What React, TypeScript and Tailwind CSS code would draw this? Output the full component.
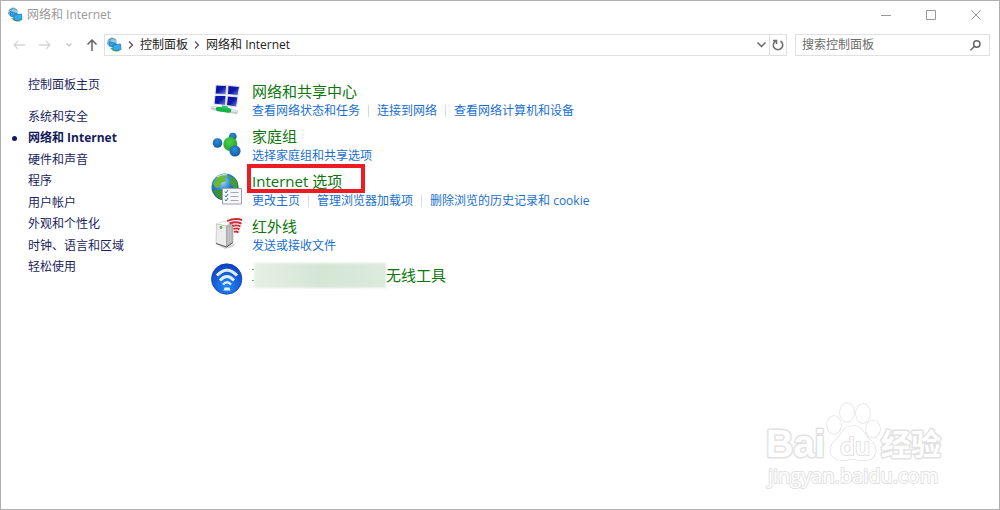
import type { ReactNode } from "react";

const navItems = [
  "系统和安全",
  "网络和 Internet",
  "硬件和声音",
  "程序",
  "用户帐户",
  "外观和个性化",
  "时钟、语言和区域",
  "轻松使用",
];

const activeItem = "网络和 Internet";

type Category = {
  title: string;
  icon: ReactNode;
  links: string[];
  highlighted?: boolean;
};

function NetworkGlyph() {
  return (
    <svg viewBox="0 0 16 16" className="h-4 w-4 shrink-0">
      <circle cx="6" cy="5.5" r="5" fill="#9cc9df" />
      <path d="M2 3.5 Q6 0 10 3 M1.5 7 Q4 4 6 .8 M1 6 Q4 9 6 9" stroke="#5d9cbd" strokeWidth="1" fill="none" />
      <path d="M4 11 Q8 16 14 14 L11 11Z" fill="#5cb83b" />
      <path d="M3.5 4.5 L10 6.5 V11 L3.5 9Z" fill="#2aa2ed" stroke="#1872b4" strokeWidth=".6" />
      <path d="M7 8 L14.5 7 L15 12.5 L9 13.8 L7 12.5Z" fill="#36aaf0" stroke="#1b73ad" strokeWidth=".7" />
    </svg>
  );
}

function SharingIcon() {
  return (
    <svg viewBox="0 0 32 32" className="h-8 w-8">
      <defs>
        <linearGradient id="screen" x1="0" y1="0" x2="1" y2="1">
          <stop offset="0" stopColor="#0a14b4" />
          <stop offset=".5" stopColor="#1116a8" />
          <stop offset="1" stopColor="#6f8fea" />
        </linearGradient>
      </defs>
      <g stroke="#dfe2e6" strokeWidth="1" fill="url(#screen)">
        <path d="M5 2 L15.500 2.500 L15 11.500 L4 11Z" />
        <path d="M17 2.500 L28.500 3.500 L27 12.500 L16.500 11.500Z" />
        <path d="M4 12.500 L15 12.500 L14.500 22.500 L3 21Z" />
        <path d="M16.500 13 L27 14 L25.500 24 L15.500 22.500Z" />
      </g>
      <path d="M2 25 L25 29" stroke="#c3c8ca" strokeWidth="4" strokeLinecap="round" />
      <path d="M2 24.3 L25 28.3" stroke="#eceeee" strokeWidth="1.5" strokeLinecap="round" />
      <path d="M7 26 L18 27.5" stroke="#12b34b" strokeWidth="4.5" strokeLinecap="round" />
      <path d="M11 22.500 L17 23.5 L17 26 L11 25Z" fill="#2bc55f" />
    </svg>
  );
}

function HomegroupIcon() {
  return (
    <svg viewBox="0 0 32 32" className="h-8 w-8">
      <defs>
        <radialGradient id="blueBall" cx=".45" cy=".35" r=".65">
          <stop offset="0" stopColor="#2b8fd8" />
          <stop offset="1" stopColor="#165a9f" />
        </radialGradient>
        <radialGradient id="greenBall" cx=".45" cy=".35" r=".65">
          <stop offset="0" stopColor="#4bd04a" />
          <stop offset="1" stopColor="#24a32c" />
        </radialGradient>
      </defs>
      <circle cx="6.500" cy="15" r="4.8" fill="url(#blueBall)" />
      <circle cx="21.800" cy="8.500" r="3.8" fill="url(#blueBall)" />
      <circle cx="19.3" cy="16" r="7" fill="url(#greenBall)" />
      <circle cx="24" cy="23" r="5.6" fill="url(#blueBall)" />
    </svg>
  );
}

function InternetIcon() {
  return (
    <svg viewBox="0 0 32 32" className="h-8 w-8">
      <defs>
        <radialGradient id="ocean" cx=".4" cy=".3" r=".7">
          <stop offset="0" stopColor="#a8dcfa" />
          <stop offset=".45" stopColor="#2c83cf" />
          <stop offset="1" stopColor="#123f83" />
        </radialGradient>
      </defs>
      <circle cx="14" cy="14" r="13.5" fill="url(#ocean)" />
      <path d="M4 7 Q8 1 15 1 L17 3 L14 5 L15 8 L10 10 L9 14 L5 15 L2 11Z" fill="#69b936" />
      <path d="M18 3 Q24 4 26.500 10 L26.500 15 L23 16 L21 12 L18 10 L20 7Z" fill="#429f35" />
      <path d="M4 17 L11 17 L14 20 L12 27 Q5 25 2 18Z" fill="#3b9236" />
      <path d="M6 4 Q10 1 16 1.500" stroke="#dff2fb" strokeWidth="1.5" fill="none" opacity=".7" />
      <path d="M11.5 15.5 H30.5 V31 H11.5Z" fill="#f6f7f9" stroke="#9ba2a9" />
      <path d="M14 18.5 l1 1.5 2-3 M14 22.5 l1 1.5 2-3 M14 26.5 l1 1.5 2-3" fill="none" stroke="#3577bb" />
      <path d="M19.500 19.5 H27.500 M19.500 23.5 H27.500 M19.500 27.5 H27.500" stroke="#a4a9b1" strokeWidth="1.2" />
    </svg>
  );
}

function InfraredIcon() {
  return (
    <svg viewBox="0 0 32 32" className="h-8 w-8">
      <path d="M6 27 L15 29 L25 25 L22 29 L14 31Z" fill="#d6d6d6" />
      <path d="M5.500 6 L13 3 L22 5 L15.500 8Z" fill="#fafafa" stroke="#c4c4c4" strokeWidth=".5" />
      <path d="M5.500 6 L15.500 8 L15.5 29 L5 25.5Z" fill="#ececec" stroke="#b5b5b5" strokeWidth=".6" />
      <path d="M15.500 8 L22 5 L22 24.500 L15.5 29Z" fill="#b4b4b4" stroke="#919191" strokeWidth=".5" />
      <path d="M17.500 10 V26 M19.500 9 V25" stroke="#d0d0d0" strokeWidth=".7" />
      <path d="M5 25.5 L15.5 29 L22 24.500" stroke="#545454" fill="none" />
      <circle cx="10" cy="9.500" r="1.4" fill="#58b53f" />
      <g fill="none" stroke="#cf2a34" strokeWidth="1.9">
        <path d="M16 3 Q24 -.5 31 2" />
        <path d="M18.500 5.500 Q24 3 30.500 5.500" />
        <path d="M21.500 8 Q26 6.500 29.500 8.500" />
        <path d="M22.500 11 Q26 9.500 28.500 11.500" />
        <path d="M23 14 Q25.500 12.800 27.500 14.500" />
      </g>
    </svg>
  );
}

function WirelessIcon() {
  return (
    <svg viewBox="0 0 32 32" className="h-8 w-8">
      <defs>
        <radialGradient id="disc" cx=".5" cy=".75" r=".7">
          <stop offset="0" stopColor="#2389f4" />
          <stop offset="1" stopColor="#1043c5" />
        </radialGradient>
      </defs>
      <circle cx="15.700" cy="16" r="15.2" fill="url(#disc)" stroke="#1543a7" strokeWidth=".8" />
      <g fill="none" stroke="#dceefb">
        <path d="M6 12.500 Q16 2 26 12.500" strokeWidth="3.200" />
        <path d="M9 17.500 Q16 9.500 23 17.500" strokeWidth="2.800" />
        <path d="M12 21.500 Q16 17 20 21.500" strokeWidth="2.400" />
      </g>
      <path d="M13.500 24.500 H18.500 L19.500 27.500 H12.500Z" fill="#e2f1fb" />
    </svg>
  );
}

function Watermark() {
  return (
    <svg
      viewBox="0 0 190 100"
      className="pointer-events-none absolute right-[48px] bottom-[14px] h-[100px] w-[190px]"
      fill="#fff"
      stroke="#e2e2e2"
      strokeWidth="3"
      strokeLinejoin="round"
      paintOrder="stroke"
    >
      <g fontWeight="700">
        <text x="5" y="62" fontSize="38" fontFamily="'Liberation Sans', sans-serif">Bai</text>
        <text x="120" y="60" fontSize="30" fontFamily="'Noto Sans CJK SC', sans-serif">经验</text>
      </g>
      <g strokeWidth="1.500">
        <ellipse cx="73" cy="30" rx="7" ry="9" />
        <ellipse cx="86" cy="17.500" rx="7" ry="9.500" />
        <ellipse cx="102" cy="18.500" rx="7" ry="9.500" />
        <ellipse cx="112" cy="34" rx="7" ry="8.500" />
        <path d="M92 31 C103 31 103 41 110 46 C118 53 115 65 105 65 C98 66 97 64 92 64 C87 64 86 66 80 65 C69 64 66 54 74 46 C81 40 81 31 92 31Z" />
      </g>
      <text x="79" y="60" fontSize="24" fontFamily="'Open Sans', sans-serif" fontWeight="600" strokeWidth="2">du</text>
      <text x="7" y="88" fontSize="20" fontFamily="'Open Sans', sans-serif" strokeWidth="2">jingyan.baidu.com</text>
    </svg>
  );
}

const categories: Category[] = [
  {
    title: "网络和共享中心",
    icon: <SharingIcon />,
    links: ["查看网络状态和任务", "连接到网络", "查看网络计算机和设备"],
  },
  { title: "家庭组", icon: <HomegroupIcon />, links: ["选择家庭组和共享选项"] },
  {
    title: "Internet 选项",
    icon: <InternetIcon />,
    links: ["更改主页", "管理浏览器加载项", "删除浏览的历史记录和 cookie"],
    highlighted: true,
  },
  { title: "红外线", icon: <InfraredIcon />, links: ["发送或接收文件"] },
];

function TitleBar() {
  return (
    <header className="flex h-7 items-center justify-between">
      <div className="flex items-center gap-1 pl-[6px] text-[#999]">
        <NetworkGlyph />
        <h1>网络和 Internet</h1>
      </div>
      <div className="flex pr-px text-[#999]">
        <button type="button" aria-label="最小化" className="flex h-7 w-[45px] items-center justify-center">
          <svg viewBox="0 0 10 10" className="h-[10px] w-[10px]" stroke="currentColor">
            <path d="M0 5.500 H10" />
          </svg>
        </button>
        <button type="button" aria-label="最大化" className="flex h-7 w-[45px] items-center justify-center">
          <svg viewBox="0 0 10 10" className="h-[10px] w-[10px]" stroke="currentColor" fill="none">
            <path d="M.5 .5 H9.500 V9.500 H.5Z" />
          </svg>
        </button>
        <button type="button" aria-label="关闭" className="flex h-7 w-[45px] items-center justify-center">
          <svg viewBox="0 0 10 10" className="h-[10px] w-[10px]" stroke="currentColor">
            <path d="M.5 .5 L9.500 9.500 M9.500 .5 L.5 9.500" />
          </svg>
        </button>
      </div>
    </header>
  );
}

function Chevron() {
  return (
    <svg viewBox="0 0 6 8" className="h-2 w-[6px]" fill="none" stroke="#555" strokeWidth="1.300">
      <path d="M1 .5 L4.500 4 L1 7.500" />
    </svg>
  );
}

function AddressBar() {
  return (
    <div className="mt-[5px] flex h-[22px] items-center pr-[9px]">
      <div className="flex w-[103px] shrink-0 items-center justify-between pr-[6px] pl-3">
        <button type="button" aria-label="后退">
          <svg viewBox="0 0 12 10" className="h-[10px] w-3" fill="none" stroke="#d5d5d5" strokeWidth="1.300">
            <path d="M12 5 H1 M5 1 L1 5 L5 9" />
          </svg>
        </button>
        <button type="button" aria-label="前进">
          <svg viewBox="0 0 12 10" className="h-[10px] w-3" fill="none" stroke="#d5d5d5" strokeWidth="1.300">
            <path d="M0 5 H11 M7 1 L11 5 L7 9" />
          </svg>
        </button>
        <button type="button" aria-label="最近的位置">
          <svg viewBox="0 0 6 4" className="h-1 w-[6px]" fill="none" stroke="#c4c4c4" strokeWidth="1.200">
            <path d="M.5 .5 L3 3 L5.500 .5" />
          </svg>
        </button>
        <button type="button" aria-label="上移">
          <svg viewBox="0 0 12 12" className="h-3 w-3" fill="none" stroke="#666" strokeWidth="1.500">
            <path d="M6 12 V1 M1.500 5.500 L6 1 L10.500 5.500" />
          </svg>
        </button>
      </div>
      <div className="flex h-[22px] flex-1 border border-[#e0e0e0]">
        <nav aria-label="地址" className="flex flex-1 items-center gap-[6px] pl-px text-[#222]">
          <NetworkGlyph />
          <Chevron />
          <a href="#panel">控制面板</a>
          <Chevron />
          <a href="#network">网络和 Internet</a>
        </nav>
        <button type="button" aria-label="展开地址" className="flex w-4 items-center justify-center">
          <svg viewBox="0 0 9 6" className="h-[6px] w-[9px]" fill="none" stroke="#666" strokeWidth="1.500">
            <path d="M.5 .5 L4.500 4.500 L8.500 .5" />
          </svg>
        </button>
        <button type="button" aria-label="刷新" className="flex w-[17px] items-center justify-center border-l border-[#e0e0e0]">
          <svg viewBox="0 0 12 12" className="h-3 w-3" fill="none" stroke="#707070" strokeWidth="1.600">
            <path d="M8.500 2 A4.700 4.700 0 1 1 3.500 2 M1 1.500 H4.500 V5" />
          </svg>
        </button>
      </div>
      <label className="ml-2 flex h-[22px] w-[195px] items-center border border-[#e0e0e0] pr-2 pl-[6px]">
        <input
          type="search"
          aria-label="搜索控制面板"
          placeholder="搜索控制面板"
          className="min-w-0 flex-1 outline-none placeholder:text-[#6b6b6b]"
        />
        <svg viewBox="0 0 11 11" className="h-[11px] w-[11px]" fill="none" stroke="#666" strokeWidth="1.500">
          <circle cx="6.800" cy="4" r="3.200" />
          <path d="M4.500 6.300 L.5 10.300" />
        </svg>
      </label>
    </div>
  );
}

function CategoryRow({ title, icon, links, highlighted }: Category) {
  return (
    <li className="flex gap-[9px]">
      <div className="mt-[2px] shrink-0">{icon}</div>
      <div>
        <h2 className="relative text-[15px] leading-5 text-[#0b750b]">
          <a href="#category">{title}</a>
          {highlighted && (
            <span className="absolute -top-[7px] -left-[5px] h-[29px] w-[118px] border-4 border-[#ed1c24]" />
          )}
        </h2>
        <div className="flex pt-1 pb-[2px] text-[#1a6fd0]">
          {links.map((link) => (
            <span
              key={link}
              className="flex h-3 items-center border-l border-[#d5dbe2] px-2 first:border-l-0 first:pl-0"
            >
              <a href="#task">{link}</a>
            </span>
          ))}
        </div>
      </div>
    </li>
  );
}

export default function App() {
  return (
    <div className="relative flex min-h-screen flex-col border border-[#b0b0b0] bg-white font-['Open_Sans','Noto_Sans_CJK_SC',sans-serif] text-[12px] leading-4">
      <TitleBar />
      <AddressBar />
      <div className="flex flex-1 pt-[21px]">
        <aside className="w-[210px] shrink-0 pl-[27px] text-[#1a2560]">
          <a href="#home">控制面板主页</a>
          <ul className="mt-4 flex h-[166px] flex-col justify-between">
            {navItems.map((item) =>
              item === activeItem ? (
                <li key={item} className="relative font-bold text-[#131a5c]">
                  <span className="absolute top-[6px] -left-[16px] h-[5px] w-[5px] rounded-full bg-[#131a5c]" />
                  <a href="#section" aria-current="page">{item}</a>
                </li>
              ) : (
                <li key={item}>
                  <a href="#section">{item}</a>
                </li>
              )
            )}
          </ul>
        </aside>
        <main className="flex-1 pt-1">
          <ul className="flex flex-col gap-[7px]">
            {categories.map((category) => (
              <CategoryRow key={category.title} {...category} />
            ))}
            <li className="flex gap-[9px]">
              <div className="mt-[2px] shrink-0">
                <WirelessIcon />
              </div>
              <h2 className="flex h-7 items-center text-[15px] leading-5 text-[#0b750b]">
                <span className="h-3 w-[2px] border-y border-[#5ca05c]" />
                <span className="h-[25px] w-[132px] bg-linear-to-r from-[#e6f0e6] via-[#d5e6d5] to-[#dcebdc] blur-[1px]" />
                <a href="#category">无线工具</a>
              </h2>
            </li>
          </ul>
        </main>
      </div>
      <Watermark />
    </div>
  );
}
